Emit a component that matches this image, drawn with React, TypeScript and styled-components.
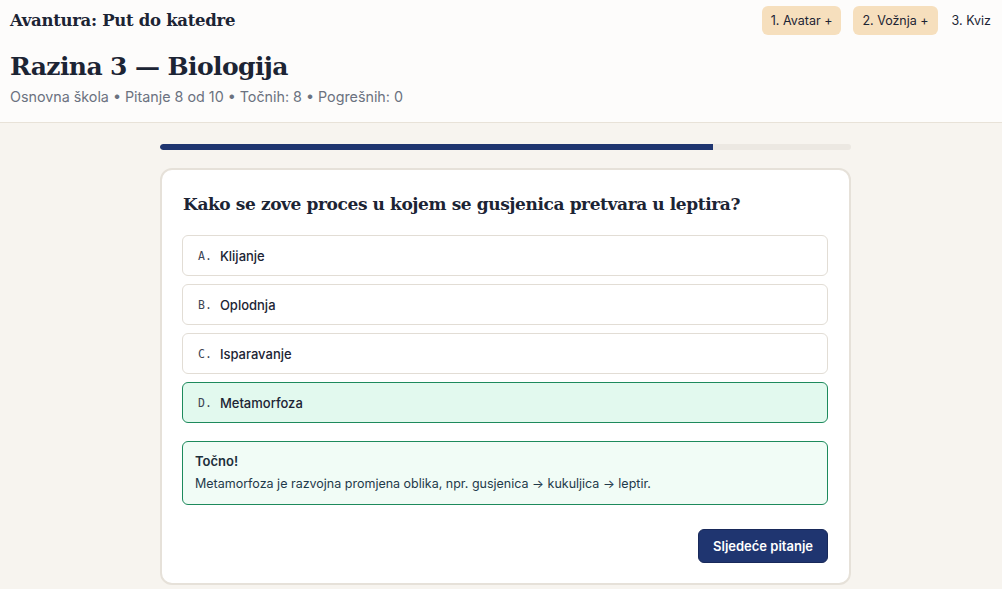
import React from "react";
import styled, { createGlobalStyle } from "styled-components";

const Global = createGlobalStyle`
  html, body { margin: 0; padding: 0; }
  body {
    background: #f7f4ef;
    font-family: Inter, "Noto Sans", sans-serif;
    color: #1c2434;
  }
`;

const serif = `Georgia, "DejaVu Serif", "Liberation Serif", serif`;

const Page = styled.div`
  min-height: 589px;
  display: flex;
  flex-direction: column;
`;

const Header = styled.header`
  background: #fdfcfb;
  border-bottom: 1px solid #e8e2d8;
  padding: 6px 10px 17px 10px;
`;

const TopRow = styled.div`
  display: flex;
  align-items: center;
  justify-content: space-between;
  height: 29px;
`;

const AppTitle = styled.div`
  font-family: ${serif};
  font-weight: 700;
  font-size: 16.5px;
  letter-spacing: -0.3px;
  color: #1c2434;
`;

const Steps = styled.nav`
  display: flex;
  align-items: center;
  gap: 12px;
`;

const Step = styled.span<{ $done?: boolean }>`
  font-size: 12.5px;
  color: #1c2434;
  padding: ${(p) => (p.$done ? "7px 9px" : "7px 1px 7px 2px")};
  border-radius: 6px;
  background: ${(p) => (p.$done ? "#f6dfbd" : "transparent")};
`;

const Level = styled.h1`
  margin: 15px 0 0 0;
  font-family: ${serif};
  font-weight: 700;
  font-size: 25px;
  line-height: 34px;
  letter-spacing: -0.6px;
  color: #1c2434;
`;

const Meta = styled.div`
  margin-top: 4px;
  font-size: 14.3px;
  color: #6b7280;
`;

const Main = styled.main`
  width: 691px;
  margin: 0 0 0 calc(50% - 341px);
  padding-top: 21px;
  display: flex;
  flex-direction: column;
  gap: 18px;
`;

const Track = styled.div`
  height: 6px;
  border-radius: 3px;
  background: #ece8e2;
  overflow: hidden;
`;

const Fill = styled.div`
  height: 100%;
  background: #1f3570;
  border-radius: 3px 0 0 3px;
`;

const Card = styled.section`
  background: #ffffff;
  border: 2px solid #e6e1d9;
  border-radius: 12px;
  padding: 20px 21px 20px 20px;
  display: flex;
  flex-direction: column;
`;

const Question = styled.h2`
  margin: 0 0 17px 1px;
  font-family: ${serif};
  font-weight: 700;
  font-size: 17px;
  line-height: 28px;
  letter-spacing: -0.4px;
  color: #1c2434;
`;

const Options = styled.div`
  display: flex;
  flex-direction: column;
  gap: 8px;
`;

const Option = styled.div<{ $correct?: boolean }>`
  height: 39px;
  display: flex;
  align-items: center;
  gap: 8px;
  padding: 0 15px;
  border-radius: 6px;
  border: 1px solid ${(p) => (p.$correct ? "#1d8a5c" : "#e2ddd5")};
  background: ${(p) => (p.$correct ? "#e2f9ee" : "#ffffff")};
`;

const Letter = styled.span`
  font-family: "DejaVu Sans Mono", "Liberation Mono", monospace;
  font-size: 11.5px;
  color: #3d4554;
`;

const OptionText = styled.span`
  font-size: 13px;
  font-weight: 500;
  color: #1c2434;
`;

const Feedback = styled.div`
  margin-top: 18px;
  border: 1px solid #1d8a5c;
  border-radius: 6px;
  background: #f1fcf6;
  padding: 11px 12px 13px 12px;
  display: flex;
  flex-direction: column;
  gap: 7px;
`;

const FeedbackTitle = styled.strong`
  font-size: 13px;
  font-weight: 600;
  color: #1c2f3a;
`;

const FeedbackText = styled.span`
  font-size: 12.5px;
  color: #1f3a4a;
`;

const Actions = styled.div`
  margin-top: 24px;
  display: flex;
  justify-content: flex-end;
`;

const NextButton = styled.button`
  height: 34px;
  padding: 0 14px;
  border: 1px solid #18295a;
  border-radius: 6px;
  background: #1f3570;
  color: #ffffff;
  font-family: Inter, "Noto Sans", sans-serif;
  font-weight: 600;
  font-size: 13px;
  cursor: pointer;
`;

const answers = [
  { key: "A", text: "Klijanje" },
  { key: "B", text: "Oplodnja" },
  { key: "C", text: "Isparavanje" },
  { key: "D", text: "Metamorfoza", correct: true },
];

export default function App() {
  const progress = 0.8;
  return (
    <Page>
      <Global />
      <Header>
        <TopRow>
          <AppTitle>Avantura: Put do katedre</AppTitle>
          <Steps>
            <Step $done>1. Avatar +</Step>
            <Step $done>2. Vožnja +</Step>
            <Step>3. Kviz</Step>
          </Steps>
        </TopRow>
        <Level>Razina 3 — Biologija</Level>
        <Meta>Osnovna škola • Pitanje 8 od 10 • Točnih: 8 • Pogrešnih: 0</Meta>
      </Header>
      <Main>
        <Track>
          <Fill style={{ width: `${progress * 100}%` }} />
        </Track>
        <Card>
          <Question>Kako se zove proces u kojem se gusjenica pretvara u leptira?</Question>
          <Options>
            {answers.map((a) => (
              <Option key={a.key} $correct={a.correct}>
                <Letter>{a.key}.</Letter>
                <OptionText>{a.text}</OptionText>
              </Option>
            ))}
          </Options>
          <Feedback>
            <FeedbackTitle>Točno!</FeedbackTitle>
            <FeedbackText>
              Metamorfoza je razvojna promjena oblika, npr. gusjenica → kukuljica → leptir.
            </FeedbackText>
          </Feedback>
          <Actions>
            <NextButton>Sljedeće pitanje</NextButton>
          </Actions>
        </Card>
      </Main>
    </Page>
  );
}
